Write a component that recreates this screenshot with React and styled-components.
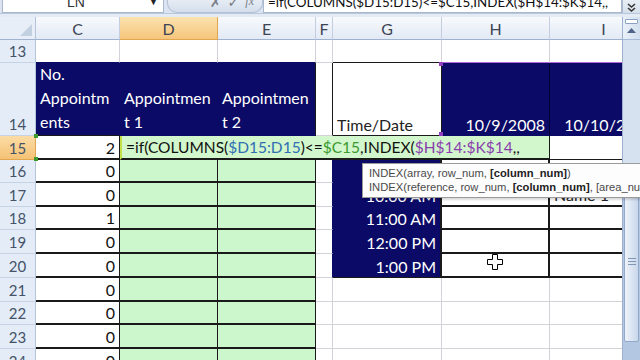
import React from 'react'
import styled, { createGlobalStyle } from 'styled-components'

const NAVY = '#0b0a66'
const GREEN = '#ccf7cc'
const GRID = '#d2d2d8'
const BLACK = '#1a1a1a'
const FONT = "Lato, 'Liberation Sans', sans-serif"

const GlobalStyle = createGlobalStyle`
  html, body {
    margin: 0;
    padding: 0;
    width: 640px;
    height: 360px;
    overflow: hidden;
    background: #fff;
    font-family: ${FONT};
  }
`

const Page = styled.div`
  width: 640px;
  height: 360px;
  overflow: hidden;
  display: flex;
  flex-direction: column;
  background: #dfe7f2;
`

const FormulaBar = styled.div`
  flex: none;
  height: 22px;
  margin-top: -9px;
  display: flex;
  align-items: stretch;
  background: #dbe4f0;
  border-bottom: 1px solid #b7c7dc;
`

const NameBox = styled.div`
  width: 160px;
  margin-left: 2px;
  background: #fff;
  border: 1px solid #a9b8cc;
  border-top: none;
  display: flex;
  align-items: center;
  font: 14px 'Liberation Sans', sans-serif;
  color: #333;

  & > span {
    flex: 1;
    text-align: center;
  }

  & > i {
    font-style: normal;
    font-size: 9px;
    width: 14px;
    color: #222;
  }
`

const FxPill = styled.div`
  width: 86px;
  margin-left: 3px;
  border-radius: 0 0 10px 10px;
  background: linear-gradient(#f4f7fb, #d4deeb);
  border: 1px solid #b3c2d6;
  border-top: none;
  display: flex;
  align-items: center;
  justify-content: flex-end;
  gap: 6px;
  padding-right: 8px;
  color: #7a7f88;
  font: 14px 'DejaVu Sans', sans-serif;

  & > em {
    font: italic 12px 'Liberation Serif', serif;
  }
`

const FormulaInput = styled.div`
  flex: 1;
  background: #fff;
  border: 1px solid #a9b8cc;
  border-top: none;
  padding-left: 4px;
  display: flex;
  align-items: center;
  font: 13.4px ${FONT};
  color: #111;
  white-space: nowrap;
  overflow: hidden;
`

const ExpandButton = styled.div`
  width: 17px;
  display: flex;
  align-items: flex-end;
  justify-content: center;
  padding-bottom: 1px;
  background: linear-gradient(#f6f8fb, #d6e0ec);
  border-left: 1px solid #a9b8cc;
`

const Gap = styled.div`
  flex: none;
  height: 3px;
  background: #e4ebf4;
`

const Main = styled.div`
  flex: 1;
  display: flex;
  position: relative;
  min-height: 0;
`

const Sheet = styled.div`
  width: 622px;
  flex: none;
  overflow: hidden;
  background: #fff;
`

const Row = styled.div`
  display: flex;
  height: ${p => p.$h}px;
`

const Corner = styled.div`
  flex: none;
  width: 36px;
  box-sizing: border-box;
  background: #e7eef8;
  border-right: 1px solid #b2c3da;
  border-bottom: 1px solid #9fb3ce;
  position: relative;

  &::after {
    content: '';
    position: absolute;
    right: 3px;
    bottom: 3px;
    border-style: solid;
    border-width: 0 0 12px 12px;
    border-color: transparent transparent #c2d0e2 transparent;
  }
`

const ColHead = styled.div`
  flex: none;
  width: ${p => p.$w}px;
  box-sizing: border-box;
  display: flex;
  align-items: center;
  justify-content: center;
  font-size: 16px;
  color: #3d4553;
  border-right: 1px solid ${p => (p.$active ? '#e0a650' : '#c3cfe0')};
  border-bottom: 1px solid ${p => (p.$active ? '#e0a650' : '#9fb3ce')};
  background: ${p =>
    p.$active
      ? 'linear-gradient(#fbe3b0, #f6c57a)'
      : 'linear-gradient(#f7f9fc, #e3eaf5)'};
`

const RowHead = styled.div`
  flex: none;
  width: 36px;
  box-sizing: border-box;
  display: flex;
  align-items: flex-end;
  justify-content: center;
  padding-bottom: 2px;
  font-size: 15px;
  color: #45536a;
  border-right: 1px solid ${p => (p.$active ? '#e0a650' : '#b2c3da')};
  border-bottom: 1px solid ${p => (p.$active ? '#e0a650' : '#c6d3e4')};
  background: ${p =>
    p.$active ? 'linear-gradient(#fbdca5, #f5c275)' : '#e4ecf7'};
`

const Cell = styled.div`
  flex: none;
  width: ${p => p.$w}px;
  box-sizing: border-box;
  display: flex;
  flex-direction: column;
  justify-content: flex-end;
  align-items: ${p => (p.$right ? 'flex-end' : 'flex-start')};
  padding: 0 4px 1px 4px;
  font-size: ${p => p.$fs || 16}px;
  line-height: ${p => (p.$lh ? p.$lh : 19)}px;
  white-space: nowrap;
  color: ${p => p.$color || '#111'};
  background: ${p => p.$bg || '#fff'};
  border-right: ${p => p.$rw || 1}px solid ${p => p.$rc || GRID};
  border-bottom: ${p => p.$bw || 1}px solid ${p => p.$bc || GRID};
  border-left: ${p => (p.$lc ? `2px solid ${p.$lc}` : 'none')};
`

const FormulaSpan = styled.span`
  color: ${p => p.$c || 'inherit'};
`

const Tooltip = styled.div`
  position: absolute;
  left: 362px;
  right: 0;
  top: 146px;
  padding: 2px 0 3px 6px;
  background: #fdfdfd;
  border: 1px solid #9a9a9a;
  border-right: none;
  font: 11.2px/14px 'Liberation Sans', sans-serif;
  color: #4a4a4a;
  white-space: nowrap;
  overflow: hidden;
  box-shadow: 1px 2px 2px rgba(0, 0, 0, 0.15);

  & b {
    color: #222;
  }
`

const Handle = styled.div`
  position: absolute;
  width: 4px;
  height: 4px;
  background: ${p => p.$c};
  left: ${p => p.$x}px;
  top: ${p => p.$y}px;
`

const CursorMark = styled.svg`
  position: absolute;
  left: 487px;
  top: 237px;
`

const Scrollbar = styled.div`
  flex: 1;
  display: flex;
  flex-direction: column;
  background: #b4c7e2;
  border-left: 1px solid #9cb1cf;
`

const ScrollButton = styled.div`
  flex: none;
  height: 23px;
  display: flex;
  flex-direction: column;
  align-items: center;
  justify-content: space-between;
  padding: 2px 0 6px;
  box-sizing: border-box;
  background: linear-gradient(90deg, #e9f0f9, #d3dfef);
  border-bottom: 1px solid #a7bbd6;
`

const SplitMark = styled.div`
  width: 11px;
  height: 3px;
  border: 1px solid #8aa1c2;
  border-radius: 1px;
  background: #fff;
`

const Track = styled.div`
  flex: none;
  height: ${p => p.$h}px;
  background: #d7e2f1;
`

const Thumb = styled.div`
  flex: none;
  height: 154px;
  box-sizing: border-box;
  margin: 0 1px;
  border: 1px solid #93a9c9;
  border-radius: 2px;
  background: linear-gradient(90deg, #eef3fa, #c9d7eb);
  display: flex;
  align-items: flex-end;
  justify-content: center;
  padding-bottom: 76px;
`

const Grip = styled.div`
  width: 8px;
  height: 5px;
  border-top: 1px solid #8196b5;
  border-bottom: 1px solid #8196b5;
  position: relative;

  &::after {
    content: '';
    position: absolute;
    left: 0;
    right: 0;
    top: 2px;
    border-top: 1px solid #8196b5;
  }
`

// C D E F G H I
const WIDTHS = [84, 98, 98, 17, 109, 108, 108]
const LETTERS = ['C', 'D', 'E', 'F', 'G', 'H', 'I']

const counts = { 15: 2, 16: 0, 17: 0, 18: 1, 19: 0, 20: 0, 21: 0, 22: 0, 23: 0, 24: 0 }
const times = { 16: '9:00 AM', 17: '10:00 AM', 18: '11:00 AM', 19: '12:00 PM', 20: '1:00 PM' }
const heights = { 13: 23, 14: 73, 15: 24, 16: 23, 17: 24, 18: 23, 19: 24, 20: 24, 21: 24, 22: 23, 23: 24, 24: 24 }

const Formula = () => (
  <>
    =if(COLUMNS(<FormulaSpan $c="#2f6fb3">$D15:D15</FormulaSpan>)&lt;=
    <FormulaSpan $c="#3c9a2e">$C15</FormulaSpan>,INDEX(
    <FormulaSpan $c="#8a3fae">$H$14:$K$14</FormulaSpan>,,
  </>
)

const bodyRow = n => {
  const [wC, wD, wE, wF, wG, wH, wI] = WIDTHS
  if (n === 13) {
    return [
      <Cell key="c" $w={wC} $bc={NAVY} />,
      <Cell key="d" $w={wD} $bc={NAVY} />,
      <Cell key="e" $w={wE} $bc={NAVY} />,
      <Cell key="f" $w={wF} />,
      <Cell key="g" $w={wG} $bc={BLACK} />,
      <Cell key="h" $w={wH} $bc="#b26ad6" />,
      <Cell key="i" $w={wI} $bc="#b26ad6" />,
    ]
  }
  if (n === 14) {
    return [
      <Cell key="c" $w={wC} $bg={NAVY} $color="#fff" $rc={NAVY} $bc={BLACK} $lh={24}>
        <span>No.</span>
        <span>Appointm</span>
        <span>ents</span>
      </Cell>,
      <Cell key="d" $w={wD} $bg={NAVY} $color="#fff" $rc={NAVY} $bc={NAVY} $lh={24}>
        <span>Appointmen</span>
        <span>t 1</span>
      </Cell>,
      <Cell key="e" $w={wE} $bg={NAVY} $color="#fff" $rc={BLACK} $bc={NAVY} $lh={24}>
        <span>Appointmen</span>
        <span>t 2</span>
      </Cell>,
      <Cell key="f" $w={wF} $rc={BLACK} />,
      <Cell key="g" $w={wG} $rc={BLACK} $bc={BLACK} $color="#222">
        Time/Date
      </Cell>,
      <Cell key="h" $w={wH} $bg={NAVY} $color="#fff" $rc="#000033" $bc={NAVY} $right>
        10/9/2008
      </Cell>,
      <Cell key="i" $w={wI} $bg={NAVY} $color="#fff" $rc={NAVY} $bc={NAVY} $right>
        10/10/2008
      </Cell>,
    ]
  }
  const base = [
    <Cell key="c" $w={wC} $right $rc={BLACK} $bc={BLACK} $bw={2}>
      {counts[n]}
    </Cell>,
  ]
  if (n === 15) {
    return [
      ...base,
      <Cell
        key="edit"
        $w={wD + wE + wF + wG + wH}
        $bg="#d3f7cd"
        $lc="#c6e04a"
        $rc={BLACK}
        $bc={BLACK}
        $bw={2}
        $fs={15.5}
      >
        <span>
          <Formula />
        </span>
      </Cell>,
      <Cell key="i" $w={wI} $bc={BLACK} />,
    ]
  }
  const boxed = n <= 20
  return [
    ...base,
    <Cell key="d" $w={wD} $bg={GREEN} $rc={BLACK} $bc={BLACK} $bw={2} />,
    <Cell key="e" $w={wE} $bg={GREEN} $rc={BLACK} $bc={BLACK} $bw={2} />,
    <Cell key="f" $w={wF} $rc={boxed ? NAVY : GRID} />,
    boxed ? (
      <Cell key="g" $w={wG} $bg={NAVY} $color="#fff" $right $rc={BLACK} $rw={2} $bc={n === 20 ? BLACK : NAVY}>
        {times[n]}
      </Cell>
    ) : (
      <Cell key="g" $w={wG} />
    ),
    <Cell key="h" $w={wH} $rc={boxed ? BLACK : GRID} $rw={boxed ? 2 : 1} $bc={boxed ? BLACK : GRID} $bw={boxed ? 2 : 1} />,
    <Cell key="i" $w={wI} $bc={boxed ? BLACK : GRID} $bw={boxed ? 2 : 1} $color="#222">
      {n === 17 ? 'Name 1' : ''}
    </Cell>,
  ]
}

const App = () => {
  const rowNums = Object.keys(heights).map(Number)
  return (
    <Page>
      <GlobalStyle />
      <FormulaBar>
        <NameBox>
          <span>LN</span>
          <i>▼</i>
        </NameBox>
        <FxPill>
          <span>✗</span>
          <span>✓</span>
          <em>fx</em>
        </FxPill>
        <FormulaInput>=if(COLUMNS($D15:D15)&lt;=$C15,INDEX($H$14:$K$14,,</FormulaInput>
        <ExpandButton>
          <svg width="9" height="9" viewBox="0 0 9 9">
            <path d="M1 1l3.5 3 3.5-3M1 5l3.5 3 3.5-3" fill="none" stroke="#333" strokeWidth="1.5" />
          </svg>
        </ExpandButton>
      </FormulaBar>
      <Gap />
      <Main>
        <Sheet>
          <Row $h={23}>
            <Corner />
            {LETTERS.map((l, i) => (
              <ColHead key={l} $w={WIDTHS[i]} $active={l === 'D'}>
                {l}
              </ColHead>
            ))}
          </Row>
          {rowNums.map(n => (
            <Row key={n} $h={heights[n]}>
              <RowHead $active={n === 15}>{n}</RowHead>
              {bodyRow(n)}
            </Row>
          ))}
        </Sheet>
        <Scrollbar>
          <ScrollButton>
            <SplitMark />
            <svg width="9" height="5" viewBox="0 0 9 5">
              <path d="M0 5L4.5 0L9 5z" fill="#4f6487" />
            </svg>
          </ScrollButton>
          <Track $h={148} />
          <Thumb>
            <Grip />
          </Thumb>
        </Scrollbar>
        <Handle $c="#8f3fc0" $x={439} $y={45} />
        <Handle $c="#8f3fc0" $x={439} $y={115} />
        <Handle $c="#3c9a2e" $x={34} $y={117} />
        <Handle $c="#3c9a2e" $x={34} $y={140} />
        <Tooltip>
          <div>
            INDEX(array, row_num, <b>[column_num]</b>)
          </div>
          <div>
            INDEX(reference, row_num, <b>[column_num]</b>, [area_num])
          </div>
        </Tooltip>
        <CursorMark width="16" height="16" viewBox="0 0 16 16">
          <path
            d="M5.5 0.5h5v5h5v5h-5v5h-5v-5h-5v-5h5z"
            fill="#fff"
            stroke="#000"
            strokeWidth="1"
          />
        </CursorMark>
      </Main>
    </Page>
  )
}

export default App
